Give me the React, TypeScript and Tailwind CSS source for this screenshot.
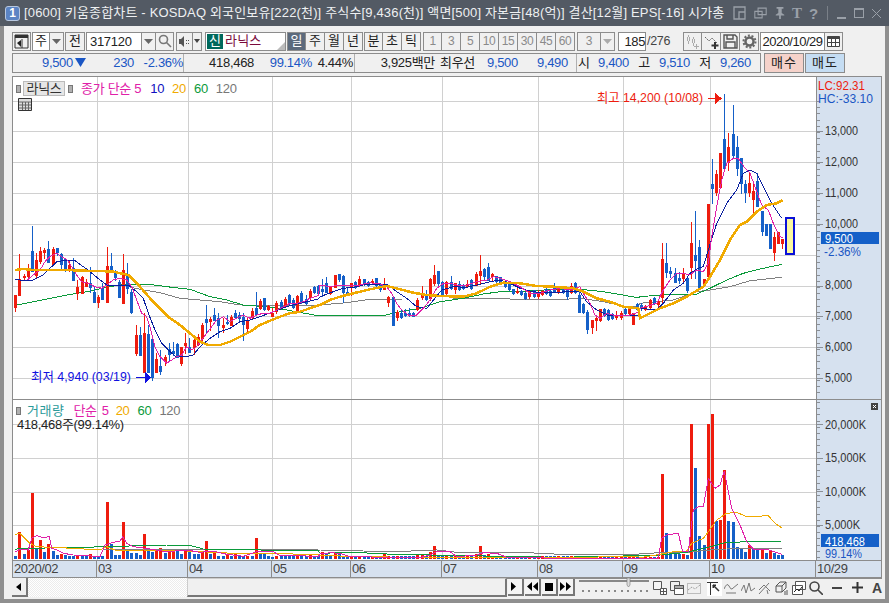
import React from "react";

// candle data in screen pixels: [body top, body bottom, high, low, 1 = red]
type Candle = [number, number, number, number, number];
const candles: Candle[] = [
  [295,307,295,311,1],[279,295,254,295,1],[276,277,274,280,1],[271,276,264,277,1],[251,271,226,271,0],[260,275,253,277,1],[251,261,247,263,1],[250,252,248,258,1],
  [249,262,241,262,0],[249,264,247,264,1],[248,252,248,255,0],[254,264,253,268,0],[259,268,258,271,0],[265,268,260,271,1],[268,280,258,280,0],[287,293,280,299,1],
  [277,293,276,293,1],[282,286,279,286,1],[283,287,267,292,0],[292,302,287,302,0],[297,302,295,307,1],[288,299,283,299,0],[266,302,247,302,1],[266,270,253,271,0],
  [271,277,270,280,0],[282,297,280,297,0],[270,303,254,303,1],[274,288,263,293,0],[292,312,289,313,0],[335,353,325,355,1],[335,355,327,355,0],[333,372,313,372,1],
  [334,372,325,372,0],[339,377,336,380,0],[359,372,353,372,1],[366,371,350,374,0],[357,361,355,365,1],[349,354,343,361,0],[351,353,342,355,0],[344,357,343,357,0],
  [347,363,347,365,1],[343,345,333,353,1],[347,352,338,352,0],[340,347,338,354,1],[337,344,334,345,1],[325,338,323,340,1],[319,322,305,332,0],[319,321,317,330,1],
  [315,320,308,320,0],[318,325,313,337,0],[325,327,318,332,1],[322,323,315,324,0],[317,325,315,325,1],[313,317,310,318,0],[315,318,312,320,0],[317,324,313,340,0],
  [320,328,317,332,1],[311,317,308,319,1],[308,314,292,315,0],[301,308,299,309,1],[298,309,298,310,0],[306,309,305,310,1],[313,316,308,316,1],[303,311,301,313,1],
  [302,307,300,308,0],[299,306,297,307,1],[295,303,294,304,0],[300,307,298,308,0],[296,312,295,312,1],[293,301,291,303,0],[299,303,295,304,0],[291,297,289,300,1],
  [287,292,286,293,0],[286,293,285,294,0],[289,291,279,296,0],[283,292,277,292,0],[287,293,286,294,1],[275,287,275,287,1],[274,279,274,281,0],[276,292,275,302,0],
  [292,293,287,294,0],[283,287,283,295,1],[282,287,281,288,0],[279,285,276,286,1],[279,284,279,285,0],[282,285,281,286,0],[281,282,279,284,1],[278,285,278,286,0],
  [285,289,283,291,0],[285,289,278,289,1],[297,302,296,306,1],[297,325,296,325,0],[312,317,310,320,1],[313,317,309,318,0],[313,315,309,316,0],[313,314,308,316,0],
  [313,316,312,316,0],[300,309,298,310,1],[293,297,286,299,1],[295,299,290,300,0],[279,298,278,300,1],[275,283,265,285,1],[271,283,271,285,0],[282,294,281,295,0],
  [282,293,281,294,1],[282,288,276,289,0],[283,289,283,293,1],[284,289,281,290,0],[285,288,284,289,0],[284,286,280,287,1],[280,288,279,289,0],[274,285,272,285,1],
  [271,275,255,283,1],[269,276,268,280,0],[267,280,263,280,0],[274,276,273,280,1],[276,281,276,285,0],[277,282,277,283,0],[281,286,280,287,0],[283,289,283,290,0],
  [289,293,289,294,0],[291,292,285,293,1],[291,294,290,295,0],[293,298,292,299,0],[291,296,290,298,1],[290,296,290,297,0],[293,296,290,298,1],[291,294,290,295,1],
  [289,293,288,294,0],[291,295,290,296,0],[286,291,283,292,0],[287,292,286,293,1],[287,292,286,293,0],[290,296,289,299,0],[286,292,283,293,1],[283,292,282,293,0],
  [295,312,290,312,0],[304,312,303,313,0],[312,329,310,333,0],[320,327,320,333,1],[318,320,316,330,1],[309,320,309,321,1],[309,315,308,316,0],[310,319,309,320,0],
  [314,318,313,319,0],[315,317,311,319,1],[313,317,311,319,1],[309,313,308,314,0],[309,313,307,314,1],[313,324,313,324,1],[304,309,303,310,0],[305,308,303,310,0],
  [306,309,305,310,1],[300,307,299,308,1],[298,303,297,304,0],[301,304,300,306,1],
  [259,297,243,303,1],[263,272,243,277,0],[271,273,267,277,0],[273,282,268,282,0],[278,280,272,283,0],[273,278,268,282,1],[278,290,277,292,0],[243,267,222,278,1],
  [255,260,211,278,0],[247,287,240,289,0],[279,285,279,285,1],[204,276,204,278,1],[184,188,159,203,0],[174,192,170,195,1],[153,187,153,187,1],[139,168,94,170,0],
  [147,162,133,170,1],[134,155,105,158,0],[147,168,136,175,0],[158,183,158,193,0],[184,192,180,202,0],[183,192,172,196,1],[191,199,182,212,1],[181,206,173,206,0],
  [211,231,211,235,0],[224,235,224,235,0],[224,248,224,248,0],[237,252,232,260,1],[232,243,232,243,1],[239,243,239,248,1],
];

const volHead = [-3,27,-5,9,66,-10,19,-7,15,-8,-4,5,-4,-3,-3,3,-3,-3,5,-3,-3,-3,57,-15,-4,-4,37,-9,-6,-6,-4,25,-10,-7,9,11,-6,7,9,-8,-5,9,-7,-5,-5,8,18,-5,8,-3,-3,5,-3,6,-3,-3,3,-3,21,-6,-6,-3,-2,3,-3,-3,-3,-3,3,-3,-3,4,-3,-3,7,-6,-3,7,-5,-3];
const volMid: Record<number, number> = { 89: 6, 97: 4, 98: 4, 100: 7, 101: 13, 111: 5, 112: 13, 113: -4, 114: 5 };
const volTail = [85,-26,-6,-6,-5,5,-4,135,-91,-23,-14,135,145,-38,39,89,-38,-37,-12,-10,-7,14,-10,-10,10,-6,9,-6,-4,-4];

const volumes = candles.map((c, i) => {
  if (i < volHead.length) return volHead[i];
  if (i >= candles.length - 30) return volTail[i - (candles.length - 30)];
  if (volMid[i]) return volMid[i];
  return (c[4] ? 1 : -1) * (i < 135 ? 3 : 2);
});

const candleX = (i: number) => Math.round(15.3 + i * 4.146);

// points were read off 3x crops, so they come with the crop's origin
const crop = (ox: number, oy: number, pts: number[]) => {
  const out: string[] = [];
  for (let i = 0; i < pts.length; i += 2) out.push(`${(ox + pts[i] / 3).toFixed(1)},${(oy + pts[i + 1] / 3).toFixed(1)}`);
  return out.join(" ");
};

const ma5 = [crop(0,200,[82,240,100,225,120,210,135,185,150,170,170,160,185,170,200,178,215,200,230,225,245,245,265,250,285,260,305,265,320,255,340,240,360,235,380,240,395,260,410,300,425,340,440,350,450,380,465,440,480,470,500,490,515,480,530,470,545,465,560,440,575,450,590,440,605,420,620,400,635,380,650,360,670,350,690,365,710,355,730,345,750,355,770,345,790,340,810,340,830,330,850,320,870,310,890,310,910,305,930,295,955,287]),
  crop(320,230,[0,165,30,170,60,165,90,165,120,165,150,158,180,162,200,170,215,190,230,220,245,240,270,258,290,255,310,235,330,210,350,175,370,160,390,160,410,165,440,165,470,155,500,150,520,140,540,145,570,155,600,170,630,190,660,190,690,180,720,175,750,180,780,170,790,190,810,220,825,255,840,265,860,250,880,255,900,258,930,255,955,247]),
  crop(640,90,[0,655,50,640,70,600,90,570,110,550,130,550,150,555,170,540,190,545,205,520,215,440,230,350,245,270,260,220,280,205,295,205,315,235,330,250,345,290,365,345,385,360,400,400,420,440,430,445])].join(" ");
const ma10 = [crop(0,200,[46,237,60,240,100,240,130,225,150,205,170,185,200,180,225,182,250,200,270,215,300,240,320,255,350,255,385,255,410,275,430,295,445,340,465,390,485,430,505,450,525,468,560,470,580,465,600,440,630,415,660,395,690,385,720,365,750,360,780,350,820,335,860,320,900,310,955,297]),
  crop(320,230,[0,200,40,185,70,175,100,172,130,165,170,162,205,165,230,185,260,205,290,230,320,235,345,205,365,180,400,170,440,172,470,165,510,155,540,150,570,160,600,175,630,183,660,188,700,188,740,185,780,185,800,215,830,240,860,255,900,258,955,255]),
  crop(640,90,[0,655,50,660,70,640,100,600,130,580,150,550,175,535,190,530,205,480,230,400,260,340,290,300,310,250,330,240,350,250,370,290,395,340,425,385])].join(" ");
const ma20 = [crop(0,200,[46,210,70,207,100,210,150,210,200,210,250,212,300,213,340,215,385,225,420,260,450,295,480,325,510,355,540,375,570,400,600,425,625,435,660,435,690,425,720,410,750,395,780,375,810,362,840,350,870,340,900,335,930,325,955,316]),
  crop(320,230,[0,225,30,210,60,200,100,190,150,178,200,168,240,178,280,188,320,195,360,198,430,200,470,190,510,170,550,158,600,160,650,168,700,170,760,175,790,185,830,205,870,215,910,230,955,235]),
  crop(640,90,[0,685,60,655,100,640,140,620,190,590,210,560,240,510,270,450,300,405,320,395,350,365,380,345,410,340,428,330])].join(" ");
const ma60 = [crop(0,200,[46,316,100,305,160,293,200,285,260,275,320,262,360,255,385,252,440,252,500,260,570,268,630,290,680,300,730,315,800,320,860,330,955,347]),
  crop(320,230,[0,257,100,257,190,257,240,245,300,235,360,215,430,205,490,192,540,185,630,183,700,178,780,178,850,185,955,203]),
  crop(640,90,[0,620,100,612,170,612,210,595,260,570,310,550,360,537,426,523])].join(" ");
const ma120 = [crop(0,200,[385,260,420,268,480,278,540,295,600,300,660,305,720,315,955,317]),
  crop(320,230,[0,225,80,218,150,208,250,207,400,207,500,205,600,208,700,210,780,205,850,215,910,228,955,228]),
  crop(640,90,[0,640,100,630,170,605,210,600,270,590,330,572,426,562])].join(" ");

const vma5 = [crop(0,395,[46,470,60,463,85,465,95,430,110,422,130,428,148,425,155,460,170,465,190,475,220,480,260,482,300,485,315,450,340,442,360,438,368,425,380,445,400,455,450,462,500,470,560,465,600,472,640,468,680,478,730,484,770,470,820,470,840,482,900,482,955,485]),
  crop(320,500,[0,162,30,158,60,160,90,170,300,173,330,165,350,155,390,155,410,170,470,165,490,158,530,160,560,172,720,175,955,176]),
  crop(640,395,[0,490,55,490,65,430,80,420,115,415,128,470,145,470,160,345,175,335,190,335,205,250,225,280,240,270,253,228,275,340,300,390,320,440,340,462,380,462,395,468,425,478])].join(" ");
const vma20 = [crop(0,395,[46,418,60,415,90,445,110,455,220,460,300,465,320,455,350,467,430,465,560,468,700,475,955,478]),
  crop(320,500,[0,165,100,170,300,172,720,172,955,170]),
  crop(640,395,[0,488,60,478,100,470,140,468,155,445,190,430,205,410,230,375,260,355,290,352,320,365,385,362,405,385,425,398])].join(" ");
const vma60 = [crop(0,395,[46,465,55,460,220,458,310,455,500,450,565,450,610,462,955,468]),
  crop(320,500,[0,160,100,157,220,163,330,165,600,170,720,172,955,167]),
  crop(640,395,[0,480,60,480,140,472,200,458,260,442,345,440,425,438])].join(" ");
const vma120 = [crop(0,395,[310,462,955,465]),
  crop(320,500,[0,150,220,155,350,150,410,157,600,157,720,163,955,165]),
  crop(640,395,[0,475,140,472,210,465,260,462,425,460])].join(" ");

const gridX = [97, 188, 272, 351, 442, 538, 623, 710];
const priceY = [101, 131, 162, 193, 224, 255, 286, 316, 347, 378];
const volY = [424, 458, 492, 525];
const priceLabels: [string, number, number][] = [["13,000",130,33],["12,000",161,33],["11,000",192,33],["10,000",223,33],["8,000",284,27],["7,000",315,27],["6,000",346,27],["5,000",377,27]];
const volLabels: [string, number, number][] = [["20,000K",424,41],["15,000K",457,41],["10,000K",491,41],["5,000K",524,35]];

function Ticks({ from, to, majors }: { from: number; to: number; majors: number[] }) {
  const t: number[] = [];
  for (let y = from; y < to; y += 6.2) t.push(Math.round(y));
  return (
    <g stroke="#8a8f96" shapeRendering="crispEdges">
      {t.map((y) => <line key={y} x1="817" x2="820" y1={y} y2={y} />)}
      {majors.map((y) => <line key={y} x1="817" x2="823" y1={y} y2={y} />)}
    </g>
  );
}

function Btn({ w, bg = "bg-[#f0f0f0]", className, children }: { w: string; bg?: string; className?: string; children?: React.ReactNode }) {
  return (
    <div className={`${w} ${bg} h-[19px] shrink-0 flex items-center justify-center border border-[#8c8c8c] ${className ?? ""}`}>
      {children}
    </div>
  );
}

const Caret = ({ color = "#444" }: { color?: string }) => (
  <svg width="9" height="5" viewBox="0 0 9 5"><path d="M0 0h9L4.5 5z" fill={color} /></svg>
);

const periods = ["1", "3", "5", "10", "15", "30", "45", "60"];

function ToolbarRow() {
  return (
    <div className="flex items-center h-[20px] text-[13px] text-[#222]">
      <Btn w="w-[19px]">
        <svg width="15" height="15" viewBox="0 0 15 15"><path d="M1 1h13v13H1z" fill="none" stroke="#333" /><path d="M1 1h13v3H1z" fill="#333" /><path d="M3 9l4-3v7z" fill="#222" /><path d="M8 5v9" stroke="#333" /></svg>
      </Btn>
      <div className="w-[1px]" />
      <div className="w-[18px] h-[19px] border border-[#8c8c8c] bg-white flex items-center justify-center">주</div>
      <Btn w="w-[14px]" className="border-l-0"><Caret color="#666" /></Btn>
      <div className="w-[1px]" />
      <Btn w="w-[20px]">전</Btn>
      <div className="w-[1px]" />
      <div className="w-[56px] h-[19px] border border-[#8c8c8c] bg-white pl-[3px] leading-[17px] tracking-[-0.3px]">317120</div>
      <Btn w="w-[14px]" className="border-l-0"><Caret color="#666" /></Btn>
      <Btn w="w-[18px]" className="border-l-0">
        <svg width="14" height="14" viewBox="0 0 14 14" fill="none" stroke="#777" strokeWidth="1.6"><circle cx="5.5" cy="5.5" r="4" /><path d="M8.5 8.5l4.5 4.5" /></svg>
      </Btn>
      <div className="w-[2px]" />
      <Btn w="w-[17px]">
        <svg width="13" height="13" viewBox="0 0 13 13" fill="#555"><path d="M1 4h2l3-3v11l-3-3H1z" /><path d="M8 5h1v1H8zM8 8h1v1H8zM10 5h1v1h-1zM10 8h1v1h-1z" /></svg>
      </Btn>
      <Btn w="w-[9px]" className="border-l-0"><svg width="6" height="4" viewBox="0 0 6 4"><path d="M0 0h6L3 4z" fill="#444" /></svg></Btn>
      <div className="w-[3px]" />
      <div className="w-[81px] h-[19px] border border-[#8c8c8c] bg-white flex items-center relative">
        <div className="w-[16px] h-[15px] ml-[1px] bg-[#00695c] text-white flex items-center justify-center">신</div>
        <span className="ml-[2px] text-[#7a0a3c] tracking-[0.2px]">라닉스</span>
        <svg className="absolute right-0 bottom-0" width="8" height="8" viewBox="0 0 8 8"><path d="M8 0v8H0z" fill="#bbb" /></svg>
      </div>
      <div className="w-[1px]" />
      <Btn w="w-[19px]" bg="bg-[#5c6a7c]" className="text-white">일</Btn>
      {["주", "월", "년"].map((t) => <Btn key={t} w="w-[19px]" className="border-l-0">{t}</Btn>)}
      <div className="w-[1px]" />
      {["분", "초", "틱"].map((t, i) => <Btn key={t} w="w-[19px]" className={i ? "border-l-0" : ""}>{t}</Btn>)}
      <div className="w-[2px]" />
      {periods.map((t, i) => (
        <Btn key={t} w="w-[19px]" className={`text-[#8a8a8a] text-[12px] tracking-[-0.5px] ${i ? "border-l-0" : ""}`}>{t}</Btn>
      ))}
      <div className="w-[2px]" />
      <Btn w="w-[24px]" className="text-[#8a8a8a] text-[12px]">3</Btn>
      <Btn w="w-[14px]" className="border-l-0"><Caret color="#aaa" /></Btn>
      <div className="w-[3px]" />
      <div className="w-[28px] h-[19px] border border-[#8c8c8c] bg-white text-right leading-[17px] tracking-[-0.4px]">185</div>
      <span className="w-[37px] pl-[1px] text-[12.5px] tracking-[-0.3px] text-[#444]">/276</span>
      <Btn w="w-[19px]">
        <svg width="15" height="15" viewBox="0 0 15 15" fill="#aaa"><path d="M3 1v9h1V1zM2 3h3v4H2zM8 3v9h1V3zM7 5h3v4H7z" /><path d="M11 10h1v2h2v1h-2v2h-1v-2H9v-1h2z" /></svg>
      </Btn>
      <Btn w="w-[19px]" className="border-l-0">
        <svg width="15" height="15" viewBox="0 0 15 15"><path d="M1 3l4 4 3-3 5 5" fill="none" stroke="#666" strokeDasharray="2 1" /><path d="M10 8h2v2.5h2.5v2H12V15h-2v-2.500H7.500v-2H10z" fill="#333" /></svg>
      </Btn>
      <Btn w="w-[19px]" className="border-l-0">
        <svg width="15" height="15" viewBox="0 0 15 15"><path d="M1 1h11l2 2v11H1z" fill="#eee" stroke="#555" strokeWidth="1.4" /><path d="M4 1v4h6V1M3 14V8h9v6" fill="none" stroke="#555" strokeWidth="1.4" /></svg>
      </Btn>
      <Btn w="w-[19px]" className="border-l-0">
        <svg width="15" height="15" viewBox="0 0 15 15"><circle cx="7.500" cy="7.500" r="4" fill="none" stroke="#666" strokeWidth="2.500" /><circle cx="7.500" cy="7.500" r="6" fill="none" stroke="#666" strokeWidth="2" strokeDasharray="2 1.700" /></svg>
      </Btn>
      <div className="w-[1px]" />
      <div className="w-[65px] h-[19px] border border-[#8c8c8c] bg-white text-center leading-[17px] tracking-[-0.5px] whitespace-nowrap">2020/10/29</div>
      <Btn w="w-[18px]" className="border-l-0">
        <svg width="13" height="12" viewBox="0 0 13 12"><path d="M.5 1.500h12v10H.5z" fill="#fff" stroke="#444" /><path d="M.5 1.500h12V4H.500z" fill="#444" /><path d="M4.500 4v7M8.500 4v7M1 7.500h11" stroke="#444" /></svg>
      </Btn>
    </div>
  );
}

const Num = ({ w, c = "text-[#1a56c4]", children }: { w: string; c?: string; children: React.ReactNode }) => (
  <span className={`${w} shrink-0 text-right whitespace-nowrap ${c}`}>{children}</span>
);

function QuoteRow() {
  return (
    <div className="flex items-center h-[20px] mt-[2px] text-[13px] tracking-[-0.3px]">
      <div className="w-[749px] h-[20px] flex bg-[#f0f0f0] border border-[#8c8c8c] leading-[18px]">
        <div className="w-[171px] flex border-r border-[#b0b0b0]">
          <Num w="w-[60px]">9,500</Num>
          <span className="ml-[2px] text-[#1a56c4]"><svg className="inline mb-[2px]" width="11" height="9" viewBox="0 0 11 9"><path d="M0 0h11L5.500 9z" fill="#1a56c4" /></svg></span>
          <Num w="w-[48px]">230</Num>
          <Num w="w-[49px]">-2.36%</Num>
        </div>
        <div className="w-[171px] flex border-r border-[#b0b0b0]">
          <Num w="w-[70px]" c="text-[#222]">418,468</Num>
          <Num w="w-[58px]">99.14%</Num>
          <Num w="w-[41px]" c="text-[#222]">4.44%</Num>
        </div>
        <div className="w-[222px] flex border-r border-[#b0b0b0]">
          <Num w="w-[80px]" c="text-[#222]">3,925백만</Num>
          <Num w="w-[40px]" c="text-[#222]">최우선</Num>
          <Num w="w-[43px]">9,500</Num>
          <Num w="w-[50px]">9,490</Num>
        </div>
        <div className="flex-1 flex pl-[1px]">
          <Num w="w-[11px]" c="text-[#222]">시</Num>
          <Num w="w-[40px]">9,400</Num>
          <Num w="w-[21px]" c="text-[#222]">고</Num>
          <Num w="w-[40px]">9,510</Num>
          <Num w="w-[21px]" c="text-[#222]">저</Num>
          <Num w="w-[40px]">9,260</Num>
        </div>
      </div>
      <div className="w-[3px]" />
      <div className="w-[40px] h-[20px] border border-[#8c8c8c] bg-[#f5d2ca] text-[#222] text-center leading-[18px] tracking-[1px]">매수</div>
      <div className="w-[1px]" />
      <div className="w-[40px] h-[20px] border border-[#8c8c8c] bg-[#c5ddf3] text-[#222] text-center leading-[18px] tracking-[1px]">매도</div>
    </div>
  );
}

const Square = ({ className = "" }: { className?: string }) => (
  <span className={`w-[5px] h-[8px] bg-[#b0b0b0] border border-[#777] shrink-0 ${className}`} />
);

function PricePane() {
  return (
    <div className="flex h-[322px]">
      <div className="relative w-[803px] h-[322px] shrink-0 bg-white">
        <svg width="803" height="322" viewBox="13 77 803 322" className="block" shapeRendering="crispEdges">
          <g stroke="#d0d0d0">
            {gridX.map((x) => <line key={x} x1={x} x2={x} y1="77" y2="399" />)}
            {priceY.map((y) => <line key={y} x1="13" x2="816" y1={y} y2={y} />)}
          </g>
          <polyline points={ma120} fill="none" stroke="#808080" />
          <polyline points={ma60} fill="none" stroke="#0a9a3a" />
          <g>
            {candles.map((c, i) => {
              const x = candleX(i);
              const col = c[4] ? "#ee1c0e" : "#1560c8";
              return (
                <g key={i} fill={col}>
                  <rect x={x} y={c[2]} width="1" height={c[3] - c[2] + 1} />
                  <rect x={x - 1} y={c[0]} width="3" height={c[1] - c[0] + 1} />
                </g>
              );
            })}
          </g>
          <polyline points={ma10} fill="none" stroke="#0a1f9e" />
          <polyline points={ma5} fill="none" stroke="#e020a8" />
          <polyline points={ma20} fill="none" stroke="#f0aa00" strokeWidth="2.500" />
          <rect x="786" y="218" width="8" height="36" fill="#fbf8a0" stroke="#0a10d8" strokeWidth="2" />
          <text x="597" y="102" fontSize="13" fill="#ee1c0e" textLength="106" lengthAdjust="spacingAndGlyphs">최고 14,200 (10/08)</text>
          <path d="M708 98.500h8" stroke="#ee1c0e" />
          <path d="M715 93l7 5.500-7 5.500z" fill="#ee1c0e" />
          <text x="31" y="381" fontSize="13" fill="#1010e0" textLength="100" lengthAdjust="spacingAndGlyphs">최저 4,940 (03/19)</text>
          <path d="M136 377.500h9" stroke="#1010e0" />
          <path d="M145 372l6 5.500-6 5.500z" fill="#1010e0" />
        </svg>
        <div className="absolute left-[3px] top-[2px] flex items-center text-[13px] tracking-[-0.3px]">
          <Square />
          <span className="w-[42px] h-[15px] ml-[2px] bg-[#e6e6e6] border border-[#bbb] text-[#333] text-center leading-[13px]">라닉스</span>
          <Square className="ml-[3px]" />
          <span className="ml-[8px] text-[#e020a8]">종가 단순 5</span>
          <span className="ml-[9px] text-[#1010c0]">10</span>
          <span className="ml-[8px] text-[#f0aa00]">20</span>
          <span className="ml-[8px] text-[#0a9a3a]">60</span>
          <span className="ml-[8px] text-[#777]">120</span>
        </div>
        <svg className="absolute left-[5px] top-[21px]" width="14" height="13" viewBox="0 0 14 13">
          <path d="M.500.500h13v12H.500z" fill="#ddd" stroke="#333" />
          <path d="M1 4h12M1 7h12M1 10h12M4.500 4v8M7.500 4v8M10.500 4v8" stroke="#666" />
        </svg>
      </div>
      <svg width="65" height="322" viewBox="817 77 64 322" className="block shrink-0 bg-[#d6e1ef] border-l border-[#8c8c8c]">
        <Ticks from={101} to={399} majors={[131, 162, 193, 224, 286, 316, 347, 378]} />
        {priceLabels.map(([t, y, len]) => (
          <text key={t} x="825" y={y + 5} fontSize="13.500" fill="#333" textLength={len} lengthAdjust="spacingAndGlyphs">{t}</text>
        ))}
        <text x="818" y="90" fontSize="13" fill="#ee1c0e" textLength="47" lengthAdjust="spacingAndGlyphs">LC:92.31</text>
        <text x="818" y="103" fontSize="13" fill="#1a56c4" textLength="55" lengthAdjust="spacingAndGlyphs">HC:-33.10</text>
        <rect x="821" y="232" width="58" height="12" fill="#1560c8" />
        <text x="825" y="243" fontSize="13.500" fill="#fff" textLength="28" lengthAdjust="spacingAndGlyphs">9,500</text>
        <text x="824" y="256" fontSize="12.500" fill="#1a56c4" textLength="37" lengthAdjust="spacingAndGlyphs">-2.36%</text>
      </svg>
    </div>
  );
}

function VolumePane() {
  return (
    <div className="flex h-[161px] border-t border-[#8c8c8c]">
      <div className="relative w-[803px] shrink-0 bg-white">
        <svg width="803" height="160" viewBox="13 400 803 160" className="block" shapeRendering="crispEdges">
          <g stroke="#d0d0d0">
            {gridX.map((x) => <line key={x} x1={x} x2={x} y1="400" y2="560" />)}
            {volY.map((y) => <line key={y} x1="13" x2="816" y1={y} y2={y} />)}
          </g>
          <g>
            {volumes.map((v, i) => (
              <rect key={i} x={candleX(i) - 1} y={559 - Math.abs(v)} width="3" height={Math.abs(v)} fill={v > 0 ? "#ee1c0e" : "#1560c8"} />
            ))}
          </g>
          <polyline points={vma120} fill="none" stroke="#808080" />
          <polyline points={vma60} fill="none" stroke="#0a9a3a" />
          <polyline points={vma20} fill="none" stroke="#f0aa00" />
          <polyline points={vma5} fill="none" stroke="#e020a8" />
        </svg>
        <div className="absolute left-[3px] top-[4px] text-[13px] tracking-[-0.3px]">
          <div className="flex items-center h-[14px]">
            <Square />
            <span className="ml-[6px] text-[#2a9a9a] tracking-[0.5px]">거래량</span>
            <span className="ml-[9px] text-[#e020a8]">단순</span>
            <span className="ml-[5px] text-[#e020a8]">5</span>
            <span className="ml-[7px] text-[#f0aa00]">20</span>
            <span className="ml-[8px] text-[#0a9a3a]">60</span>
            <span className="ml-[8px] text-[#777]">120</span>
          </div>
          <div className="text-[#222] leading-[14px] ml-[1px]">418,468주(99.14%)</div>
        </div>
      </div>
      <svg width="65" height="160" viewBox="817 400 64 160" className="block shrink-0 bg-[#d6e1ef] border-l border-[#8c8c8c]">
        <Ticks from={402} to={560} majors={[424, 458, 491, 525]} />
        {volLabels.map(([t, y, len]) => (
          <text key={t} x="825" y={y + 5} fontSize="13.500" fill="#333" textLength={len} lengthAdjust="spacingAndGlyphs">{t}</text>
        ))}
        <rect x="871" y="403" width="7" height="7" fill="#444" />
        <path d="M873 405l3 3M876 405l-3 3" stroke="#fff" />
        <rect x="821" y="534" width="58" height="13" fill="#1560c8" />
        <text x="825" y="545.500" fontSize="13.500" fill="#fff" textLength="40" lengthAdjust="spacingAndGlyphs">418,468</text>
        <text x="825" y="558" fontSize="12.500" fill="#1a56c4" textLength="37" lengthAdjust="spacingAndGlyphs">99.14%</text>
      </svg>
    </div>
  );
}

function DateAxis() {
  const labels: [string, string][] = [["w-[84px]", "2020/02"], ["w-[91px]", "03"], ["w-[84px]", "04"], ["w-[79px]", "05"], ["w-[91px]", "06"], ["w-[96px]", "07"], ["w-[85px]", "08"], ["w-[87px]", "09"], ["w-[106px]", "10"]];
  return (
    <div className="flex h-[18px] border-y border-[#8c8c8c] bg-[#d6e1ef] text-[13px] tracking-[-0.400px] text-[#444] leading-[16px]">
      {labels.map(([w, t]) => (
        <div key={t} className={`${w} shrink-0 border-r border-[#8c8c8c] pl-[1px]`}>{t}</div>
      ))}
      <div className="pl-[1px]">10/29</div>
    </div>
  );
}

const tool = "w-[15px] h-[17px] shrink-0 flex items-center justify-center";

function BottomBar() {
  return (
    <div className="flex items-center h-[19px] -mt-[1px] text-[#333]">
      <div className="w-[16px] h-[19px] flex items-center justify-center bg-[#f0f0f0] border-r-2 border-b-2 border-[#777]">
        <svg width="5" height="8" viewBox="0 0 5 8"><path d="M5 0v8L0 4z" fill="#000" /></svg>
      </div>
      <div className="w-[161px] h-[19px] bg-[repeating-conic-gradient(#ffffff_0_25%,#ececec_0_50%)] bg-[length:2px_2px]" />
      <div className="w-[323px] h-[19px] bg-[#f0f0f0] border border-[#ccc] border-b-2 border-b-[#777] border-r-2 border-r-[#777]" />
      {[
        "M2 1l5 4.500-5 4.500z",
        "M6 1v9L1 5.500zM12 1v9L7 5.500z",
        "M2 2h8v8H2z",
        "M1 1l5 4.500-5 4.500zM7 1l5 4.500-5 4.500z",
      ].map((d) => (
        <div key={d} className="w-[16px] h-[17px] ml-[1px] flex items-center justify-center bg-[#f4f4f4] border-r-2 border-b-2 border-[#777]">
          <svg width="13" height="11" viewBox="0 0 13 11"><path d={d} fill="#000" /></svg>
        </div>
      ))}
      <div className="w-[76px] h-[19px] ml-[2px] shrink-0 relative">
        <svg width="76" height="19" viewBox="0 0 76 19" className="block">
          <path d="M2 3h70" stroke="#888" strokeWidth="2" />
          <path d="M50 0h3v7l-1.500 2L50 7z" fill="#ddd" stroke="#777" strokeWidth=".6" />
          <path d="M6 12v2M12 12v2M19 12v2M25 12v2M32 12v2M38 12v2M45 12v2M51 12v2M58 12v2M64 12v2M70 12v2" stroke="#222" />
        </svg>
      </div>
      <div className="flex items-center gap-[2px]">
        <div className={tool}>
          <svg width="14" height="14" viewBox="0 0 14 14" fill="none" stroke="#555"><path d="M.500.500h8v8h-8z" fill="#f4f4f4" /><path d="M7.500 7.500h6v6h-6zM10.500 7.500v6M7.500 10.500h6" fill="#fff" /></svg>
        </div>
        <div className={tool}>
          <svg width="14" height="14" viewBox="0 0 14 14" fill="none" stroke="#555"><path d="M.500.500h9v9h-9z" /><path d="M4.500 4.500h9v9h-9z" fill="#fff" /><path d="M4.500 4.500h9v3h-9z" fill="#aaa" /></svg>
        </div>
        <div className={tool}>
          <svg width="14" height="14" viewBox="0 0 14 14" fill="none" stroke="#888" strokeDasharray="1 1"><path d="M.500 2.500h13v10H.500z" /><path d="M1 9l4-3 3 2 5-4" /></svg>
        </div>
        <div className={`${tool} bg-white ml-[3px]`}>
          <svg width="14" height="14" viewBox="0 0 14 14" fill="none" stroke="#333"><path d="M0 1.500h11M3.500 1v13" /><path d="M6 4l6 6" strokeWidth="1.500" /><path d="M6 4h3L6 7z" fill="#333" /></svg>
        </div>
        {[
          "M0 8q3-7 5-3t3 3 6-5M2 12h10",
          "M0 10l3-6 2 8 3-10 2 8 4-3",
          "M1 13L11 2M1 9l5-5 6 6M9 9l1 4",
        ].map((d) => (
          <div key={d} className={tool}>
            <svg width="14" height="14" viewBox="0 0 14 14" fill="none" stroke="#777"><path d={d} /></svg>
          </div>
        ))}
        <div className={tool}>
          <svg width="14" height="14" viewBox="0 0 14 14" fill="none" stroke="#555"><path d="M1 5l4-4h6v6l-4 4H1zM1 5h6v6M7 5l4-4" /><path d="M10 10v4M12 9v5" /></svg>
        </div>
        <div className={tool}>
          <svg width="14" height="14" viewBox="0 0 14 14" fill="none" stroke="#555"><path d="M3.500 .500h10v8h-10zM.500 4.500h10v9h-10z" fill="#fff" /><path d="M2 11l3-3 2 2 3-4" stroke="#222" /></svg>
        </div>
        <div className={tool}>
          <svg width="14" height="14" viewBox="0 0 14 14" fill="none" stroke="#444" strokeWidth="1.600"><circle cx="5.500" cy="5.500" r="4.500" /><path d="M9 9l5 5" /></svg>
        </div>
        <div className="w-[4px]" />
        <div className="w-[10px] h-[2px] bg-[#444]" />
        <div className="w-[6px]" />
        <svg width="11" height="11" viewBox="0 0 11 11"><path d="M4.500 0h2v4.500H11v2H6.500V11h-2V6.500H0v-2h4.500z" fill="#333" /></svg>
        <div className="w-[5px]" />
        <span className="text-[14px] font-bold text-[#444] leading-none">A</span>
      </div>
    </div>
  );
}

export default function App() {
  return (
    <div className="w-[889px] h-[603px] overflow-hidden flex flex-col bg-[#f0f0f0] font-['Liberation_Sans','Noto_Sans_CJK_KR',sans-serif]">
      <div className="h-[26px] shrink-0 bg-[#535a64] flex items-center pl-[5px] pr-[8px] text-[#eef0f2] text-[13px] whitespace-nowrap">
        <div className="w-[15px] h-[15px] rounded-[3px] bg-[#5b84c4] border border-[#b8c8e0] text-white text-[12px] font-bold flex items-center justify-center">1</div>
        <span className="ml-[4px] tracking-[0.16px]">[0600] 키움종합차트 - KOSDAQ 외국인보유[222(천)] 주식수[9,436(천)] 액면[500] 자본금[48(억)] 결산[12월] EPS[-16] 시가총</span>
        <div className="ml-auto flex items-center text-[#9aa0a8]">
          <svg width="13" height="14" viewBox="0 0 13 14" fill="none" stroke="#9aa0a8" strokeWidth="1.300"><path d="M1 1h11v12H1zM6 13V6h6" /></svg>
          <svg className="ml-[8px]" width="13" height="14" viewBox="0 0 16 14" fill="none" stroke="#9aa0a8" strokeWidth="1.300"><path d="M5 1h10v8H5zM1 5h9v8H1z" /></svg>
          <svg className="ml-[7px]" width="12" height="14" viewBox="0 0 14 14" fill="#9aa0a8"><path d="M3 0h8v2H9v5l3 2v1H8v4H6v-4H2V9l3-2V2H3z" /></svg>
          <span className="ml-[6px] font-['Liberation_Serif',serif] font-bold text-[15px] leading-none w-[9px]">T</span>
          <span className="ml-[8px] font-bold text-[15px] leading-none w-[8px]">?</span>
          <div className="w-[1px] h-[14px] bg-[#7a8088] ml-[10px]" />
          <div className="w-[9px] h-[2px] bg-[#9aa0a8] mt-[10px] ml-[9px]" />
          <div className="w-[10px] h-[10px] border border-[#9aa0a8] border-t-2 ml-[8px]" />
          <svg className="ml-[8px]" width="9" height="9" viewBox="0 0 9 9" stroke="#9aa0a8"><path d="M0 0l9 9M9 0L0 9" /></svg>
        </div>
      </div>
      <div className="flex-1 min-h-0 flex flex-col pl-[8px] pr-[3px] pt-[5px] border-l-[4px] border-r-[4px] border-b-[4px] border-[#8f8f8f]">
        <ToolbarRow />
        <QuoteRow />
        <div className="mt-[3px] w-[870px] border border-[#8c8c8c]">
          <PricePane />
          <VolumePane />
          <DateAxis />
        </div>
        <BottomBar />
      </div>
    </div>
  );
}
